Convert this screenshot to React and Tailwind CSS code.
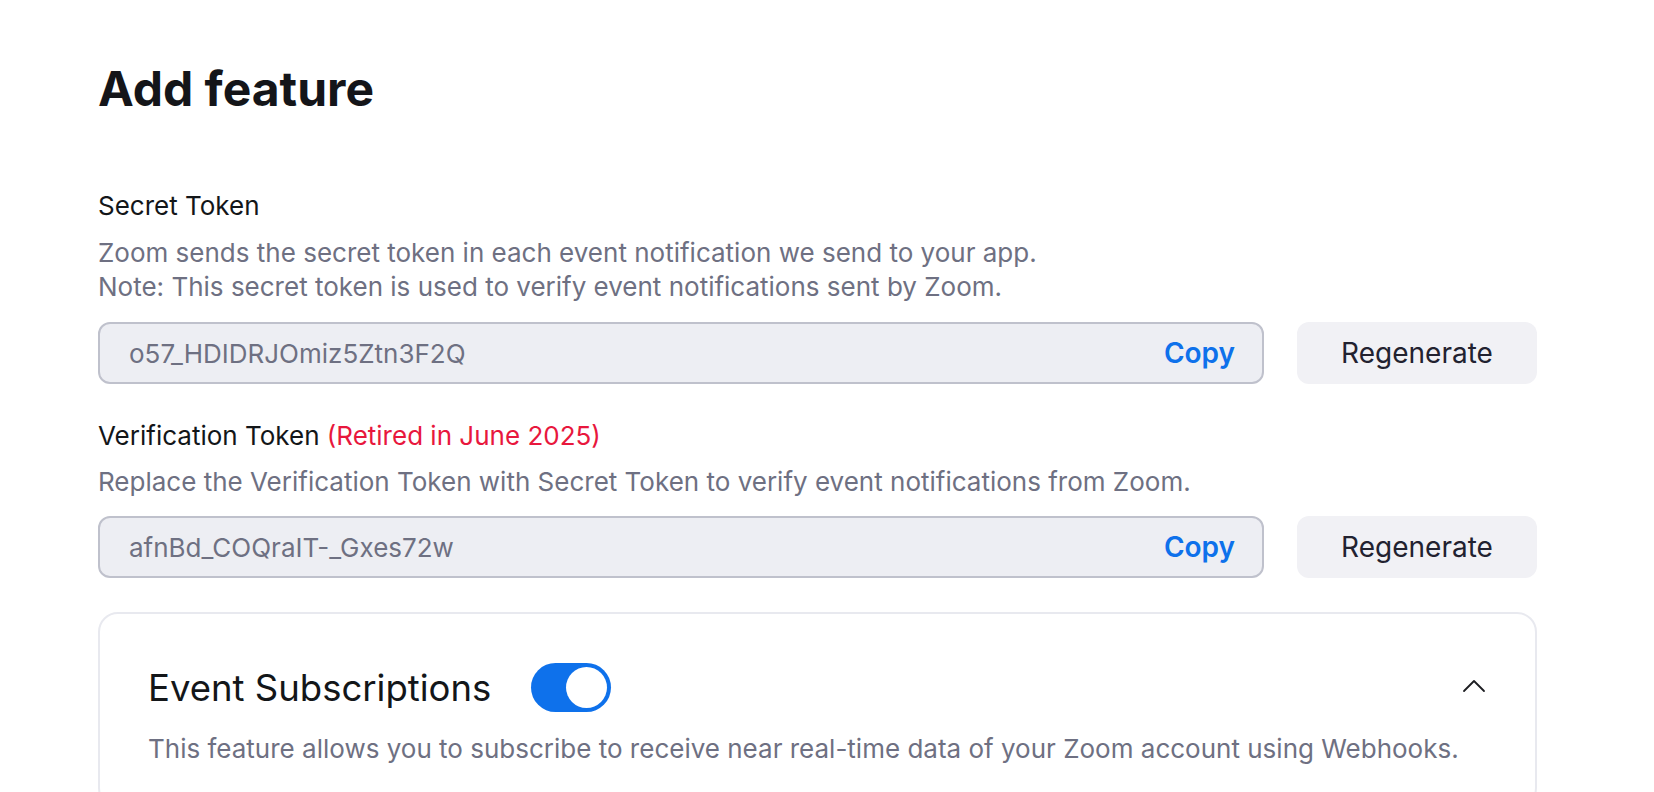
import React, { useState } from "react";

const TokenField = ({ value }) => {
    return (
        <div className="flex items-center gap-[33px]">
            <div className="flex-1 h-[62px] flex items-center justify-between rounded-[12px] border-2 border-[#bfc1cc] bg-[#edeef3] pl-[29px] pr-[27px]">
                <span className="text-[26px] text-[#6e7082]">{value}</span>
                <button className="text-[28px] font-semibold text-[#0e71eb]">Copy</button>
            </div>
            <button className="w-[240px] h-[62px] rounded-[12px] bg-[#f1f1f5] text-[28px] text-[#222230]">
                Regenerate
            </button>
        </div>
    );
};

export default function App() {
    const [enabled, setEnabled] = useState(true);

    return (
        <div className="min-h-screen bg-white font-['Inter',sans-serif] pl-[98px] pr-[117px] pt-[60px]">

            <h1 className="text-[48px] leading-[58px] font-bold text-[#141519]">Add feature</h1>

            {/* Secret token */}
            <div className="mt-[71px] text-[26px] leading-[34px] text-[#131619]">Secret Token</div>
            <p className="mt-[13px] text-[26px] leading-[34px] text-[#6e7082]">
                Zoom sends the secret token in each event notification we send to your app.
                <br />
                Note: This secret token is used to verify event notifications sent by Zoom.
            </p>
            <div className="mt-[18px]">
                <TokenField value="o57_HDIDRJOmiz5Ztn3F2Q" />
            </div>

            {/* Verification token */}
            <div className="mt-[35px] text-[26px] leading-[34px] text-[#131619]">
                Verification Token <span className="text-[#e8173d]">(Retired in June 2025)</span>
            </div>
            <p className="mt-[12px] text-[26px] leading-[34px] text-[#6e7082]">
                Replace the Verification Token with Secret Token to verify event notifications from Zoom.
            </p>
            <div className="mt-[17px]">
                <TokenField value="afnBd_COQraIT-_Gxes72w" />
            </div>

            {/* Event subscriptions card */}
            <div className="mt-[34px] rounded-[20px] border-2 border-[#e8e9ef] px-[48px] pt-[49px] pb-[40px]">
                <div className="flex items-center justify-between">
                    <div className="flex items-center gap-[40px]">
                        <span className="text-[36.5px] leading-[44px] text-[#131619]">Event Subscriptions</span>
                        <button
                            onClick={() => setEnabled(!enabled)}
                            className={`w-[80px] h-[49px] rounded-full flex items-center px-[4px] ${enabled ? "bg-[#0e71eb] justify-end" : "bg-[#c4c6d0] justify-start"}`}
                        >
                            <span className="w-[41px] h-[41px] rounded-full bg-white" />
                        </button>
                    </div>
                    <svg width="24" height="14" viewBox="0 0 24 14" fill="none" className="mr-[1px] -mt-[4px]">
                        <path d="M2 12 L12 2 L22 12" stroke="#1d1e22" strokeWidth="1.8" strokeLinecap="round" strokeLinejoin="round" />
                    </svg>
                </div>
                <p className="mt-[20px] text-[26px] leading-[34px] text-[#6e7082]">
                    This feature allows you to subscribe to receive near real-time data of your Zoom account using Webhooks.
                </p>
            </div>

        </div>
    );
}
